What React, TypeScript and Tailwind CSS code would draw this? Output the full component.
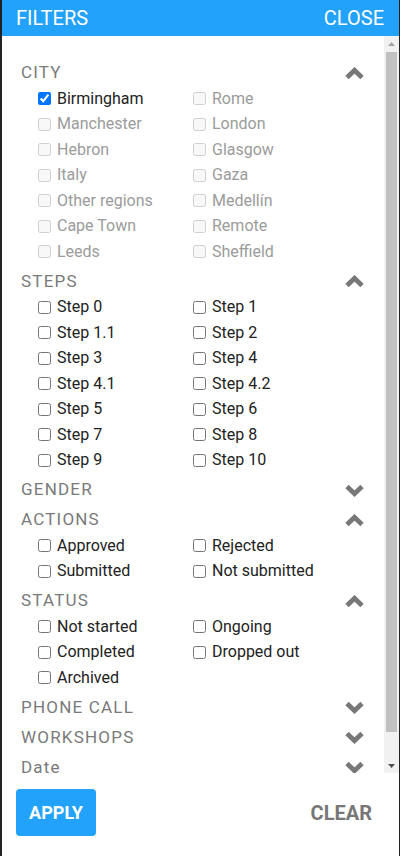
import React from 'react';

type Item = { label: string; checked?: boolean; disabled?: boolean };

const cities: Item[] = [
  { label: 'Birmingham', checked: true },
  { label: 'Rome', disabled: true },
  { label: 'Manchester', disabled: true },
  { label: 'London', disabled: true },
  { label: 'Hebron', disabled: true },
  { label: 'Glasgow', disabled: true },
  { label: 'Italy', disabled: true },
  { label: 'Gaza', disabled: true },
  { label: 'Other regions', disabled: true },
  { label: 'Medellín', disabled: true },
  { label: 'Cape Town', disabled: true },
  { label: 'Remote', disabled: true },
  { label: 'Leeds', disabled: true },
  { label: 'Sheffield', disabled: true },
];

const steps: Item[] = [
  'Step 0', 'Step 1', 'Step 1.1', 'Step 2', 'Step 3', 'Step 4', 'Step 4.1',
  'Step 4.2', 'Step 5', 'Step 6', 'Step 7', 'Step 8', 'Step 9', 'Step 10',
].map((label) => ({ label }));

const actions: Item[] = ['Approved', 'Rejected', 'Submitted', 'Not submitted'].map((label) => ({ label }));

const statuses: Item[] = ['Not started', 'Ongoing', 'Completed', 'Dropped out', 'Archived'].map((label) => ({ label }));

function Chevron({ up }: { up: boolean }) {
  return (
    <svg width="21" height="13" viewBox="0 0 21 13" className="shrink-0">
      <path
        d={up ? 'M3 10.5 L10.5 3.3 L18 10.5' : 'M3 2.5 L10.5 9.7 L18 2.5'}
        fill="none"
        stroke="#777"
        strokeWidth="4.8"
        strokeLinejoin="miter"
      />
    </svg>
  );
}

function Section({ title, open, items }: { title: string; open: boolean; items?: Item[] }) {
  return (
    <div className="mb-1">
      <div className="flex h-[26px] items-center justify-between pl-[19px] pr-[19px]">
        <span className="text-[17px] tracking-[1.2px] text-[#7a7a7a]">{title}</span>
        <Chevron up={open} />
      </div>
      {open && items && (
        <div className="grid grid-cols-[155px_1fr] pl-[36px]">
          {items.map((item) => (
            <label key={item.label} className="flex h-[25.5px] items-center gap-[6px]">
              <input
                type="checkbox"
                defaultChecked={item.checked}
                disabled={item.disabled}
                className="m-0 h-[13px] w-[13px]"
              />
              <span className={item.disabled ? 'text-[16px] text-[#9b9b9b]' : 'text-[16px] text-[#222]'}>
                {item.label}
              </span>
            </label>
          ))}
        </div>
      )}
    </div>
  );
}

function Scrollbar() {
  return (
    <div className="flex w-[15px] shrink-0 flex-col bg-[#f1f1f1]">
      <div className="flex h-[15px] items-center justify-center">
        <svg width="7" height="4" viewBox="0 0 7 4">
          <path d="M0 4 L3.5 0 L7 4 Z" fill="#a3a3a3" />
        </svg>
      </div>
      <div className="mx-[2px] mt-px h-[680px] bg-[#c1c1c1]" />
      <div className="flex-1" />
      <div className="flex h-[15px] items-center justify-center">
        <svg width="7" height="4" viewBox="0 0 7 4">
          <path d="M0 0 L7 0 L3.5 4 Z" fill="#505050" />
        </svg>
      </div>
    </div>
  );
}

export default function App() {
  return (
    <div className="flex h-[856px] w-[400px] flex-col border-l-2 border-r border-[#222] bg-white font-['Roboto',sans-serif]">
      <div className="flex h-9 shrink-0 items-center justify-between bg-[#22a2fa] pl-[14px] pr-[15px] text-[20px] text-white">
        <span>FILTERS</span>
        <span>CLOSE</span>
      </div>

      <div className="flex min-h-0 flex-1">
        <div className="min-w-0 flex-1 overflow-hidden pt-[24px]">
          <Section title="CITY" open items={cities} />
          <Section title="STEPS" open items={steps} />
          <Section title="GENDER" open={false} />
          <Section title="ACTIONS" open items={actions} />
          <Section title="STATUS" open items={statuses} />
          <Section title="PHONE CALL" open={false} />
          <Section title="WORKSHOPS" open={false} />
          <Section title="Date" open={false} />
        </div>
        <Scrollbar />
      </div>

      <div className="flex h-[83px] shrink-0 items-start justify-between pl-[14px] pr-[27px] pt-4">
        <button className="flex h-[47px] w-[80px] items-center justify-center rounded-[4px] bg-[#22a2fa] text-[18px] font-bold text-white">
          APPLY
        </button>
        <button className="flex h-[47px] items-center text-[20px] font-bold text-[#777]">CLEAR</button>
      </div>
    </div>
  );
}
